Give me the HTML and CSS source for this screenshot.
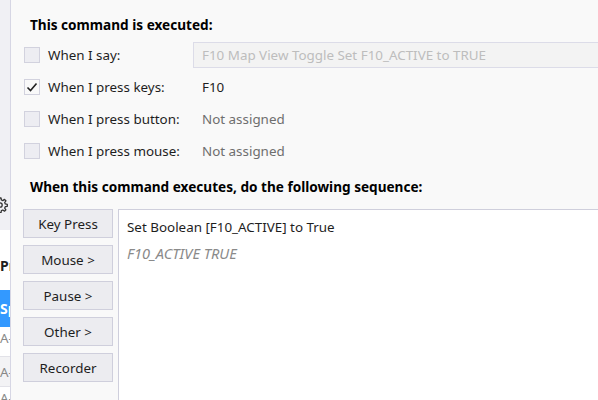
FILE: index.html
```html
<!DOCTYPE html>
<html lang="en">
  <head>
    <meta charset="UTF-8" />
    <meta name="viewport" content="width=device-width, initial-scale=1.0" />
    <title>Edit Command</title>
    <link rel="stylesheet" href="styles.css">
  </head>
  <body>
    <div class="side">
      <div class="side-top">
        <svg class="gear" width="16" height="16" viewBox="0 0 16 16">
          <path d="M7 1h2l.4 2 1.4.6 1.7-1.2 1.4 1.4-1.2 1.7.6 1.4 2 .4v2l-2 .4-.6 1.4 1.2 1.7-1.4 1.4-1.7-1.2-1.4.6-.4 2H7l-.4-2-1.4-.6-1.7 1.2-1.4-1.4 1.2-1.7-.6-1.4-2-.4V7l2-.4.6-1.4-1.2-1.7 1.4-1.4 1.7 1.2 1.4-.6z" fill="none" stroke="#333" stroke-width="1.3" stroke-linejoin="round"/>
          <circle cx="8" cy="8" r="2.2" fill="none" stroke="#333" stroke-width="1.3"/>
        </svg>
      </div>
      <div class="side-title">Pr</div>
      <div class="side-sel">Sp</div>
      <div class="side-row">A-</div>
      <div class="side-row alt">A-</div>
      <div class="side-row">A-</div>
    </div>

    <div class="dialog">
      <h2 class="section">This command is executed:</h2>

      <div class="trigger">
        <span class="check"></span>
        <span class="label">When I say:</span>
        <div class="say-box">F10 Map View Toggle Set F10_ACTIVE to TRUE</div>
      </div>
      <div class="trigger">
        <span class="check on">
          <svg width="12" height="12" viewBox="0 0 12 12"><path d="M1.5 6.5l3 3 6-7" fill="none" stroke="#222" stroke-width="1.6"/></svg>
        </span>
        <span class="label">When I press keys:</span>
        <span class="value">F10</span>
      </div>
      <div class="trigger">
        <span class="check"></span>
        <span class="label">When I press button:</span>
        <span class="value muted">Not assigned</span>
      </div>
      <div class="trigger">
        <span class="check"></span>
        <span class="label">When I press mouse:</span>
        <span class="value muted">Not assigned</span>
      </div>

      <h2 class="section second">When this command executes, do the following sequence:</h2>

      <div class="sequence">
        <div class="actions">
          <button>Key Press</button>
          <button>Mouse &gt;</button>
          <button>Pause &gt;</button>
          <button>Other &gt;</button>
          <button>Recorder</button>
        </div>
        <div class="list">
          <div class="item">Set Boolean [F10_ACTIVE] to True</div>
          <div class="item note">F10_ACTIVE TRUE</div>
        </div>
      </div>
    </div>
  </body>
</html>
```

FILE: styles.css
```css
body {
  margin: 0;
  width: 598px;
  height: 400px;
  overflow: hidden;
  display: flex;
  font-family: "Noto Sans", "Open Sans", sans-serif;
  font-size: 13.4px;
  color: #1e1e1e;
  background-color: #f9f9f9;
}

.side {
  width: 10px;
  flex-shrink: 0;
  overflow: hidden;
  border-right: 1px solid #d6d6e4;
  background-color: #ffffff;
  white-space: nowrap;
}

.side-top {
  height: 230px;
  background-color: #f0f0f4;
  display: flex;
  align-items: flex-end;
}

.gear {
  margin: 0 0 17px -8px;
}

.side-title {
  height: 60px;
  line-height: 72px;
  font-weight: bold;
  font-size: 14px;
}

.side-sel {
  height: 37px;
  line-height: 37px;
  background-color: #3399ff;
  color: white;
  font-weight: bold;
  font-size: 14px;
}

.side-row {
  height: 29px;
  line-height: 22px;
  color: #888;
  border-bottom: 1px solid #e2e2e8;
}

.side-row.alt {
  background-color: #f3f3f5;
  line-height: 30px;
}

.dialog {
  flex: 1;
  min-width: 0;
  padding: 15px 0 0 13px;
}

.section {
  margin: 0 0 4px 6px;
  font-size: 13.6px;
  font-weight: bold;
  line-height: 20px;
  color: #000;
}

.section.second {
  margin-top: 10px;
  margin-bottom: 12px;
}

.trigger {
  height: 32px;
  display: flex;
  align-items: center;
}

.check {
  width: 14px;
  height: 14px;
  border: 1px solid #d2d2de;
  background-color: #ededf2;
  display: flex;
  align-items: center;
  justify-content: center;
  flex-shrink: 0;
}

.check.on {
  background-color: #f9f9f9;
}

.label {
  margin-left: 8px;
  width: 154px;
  flex-shrink: 0;
}

.value.muted {
  color: #6e6e6e;
}

.say-box {
  margin-left: -9px;
  flex: 1;
  height: 24px;
  line-height: 24px;
  padding-left: 8px;
  border: 1px solid #dcdce8;
  border-right: none;
  background-color: #f3f3f3;
  color: #bdbdbd;
  white-space: nowrap;
}

.sequence {
  display: flex;
  margin-left: -1px;
}

.actions {
  width: 90px;
  display: flex;
  flex-direction: column;
  gap: 7px;
  flex-shrink: 0;
}

.actions button {
  height: 29px;
  margin: 0;
  padding: 0;
  font-family: inherit;
  font-size: 13.4px;
  color: #1e1e1e;
  background-color: #ececf0;
  border: 1px solid #cfcfdc;
}

.list {
  flex: 1;
  height: 200px;
  margin-left: 5px;
  padding: 6px 0 0 8px;
  background-color: white;
  border-top: 1px solid #cfcfdc;
  border-left: 1px solid #cfcfdc;
}

.item {
  line-height: 22px;
  height: 26px;
  white-space: nowrap;
}

.item.note {
  font-style: italic;
  font-size: 14.6px;
  color: #8a8a8a;
}
```
